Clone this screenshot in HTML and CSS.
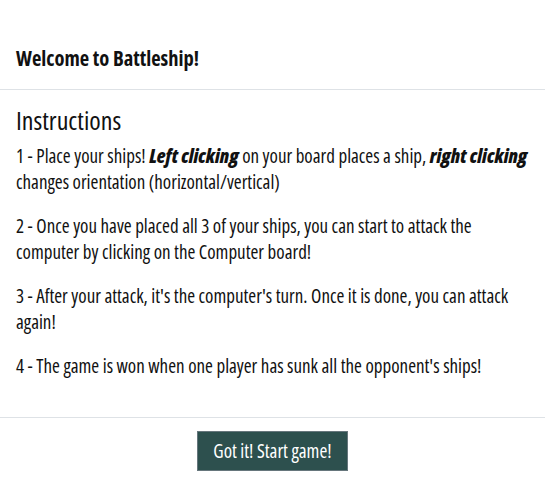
FILE: index.html
```html
<!DOCTYPE html>
<html lang="en">
<head>
<meta charset="utf-8">
<title>Battleship</title>
<link rel="stylesheet" href="styles.css">
</head>
<body>
<div class="modal">
  <div class="modal-header">
    <h5 class="modal-title">Welcome to Battleship!</h5>
  </div>
  <div class="modal-body">
    <h3 class="section-title">Instructions</h3>
    <p>1 - Place your ships! <b><i>Left clicking</i></b> on your board places a ship, <b><i>right clicking</i></b> changes orientation (horizontal/vertical)</p>
    <p>2 - Once you have placed all 3 of your ships, you can start to attack the computer by clicking on the Computer board!</p>
    <p>3 - After your attack, it's the computer's turn. Once it is done, you can attack again!</p>
    <p>4 - The game is won when one player has sunk all the opponent's ships!</p>
  </div>
  <div class="modal-footer">
    <button class="btn-start" type="button">Got it! Start game!</button>
  </div>
</div>
</body>
</html>
```
FILE: styles.css
```css
html, body {
  margin: 0;
  padding: 0;
  background: #fff;
}
body {
  font-family: "Open Sans", "Roboto Condensed", "Liberation Sans", sans-serif;
  font-stretch: 75%;
  font-weight: 500;
  color: #111;
}
.modal {
  padding-top: 28px;
}
.modal-header {
  padding: 16px;
  border-bottom: 1px solid #dee2e6;
}
.modal-title {
  margin: 0;
  font-size: 20.5px;
  line-height: 29px;
  font-weight: 700;
}
.modal-body {
  padding: 16px 16px 20px;
}
.section-title {
  margin: 0 0 8px;
  font-size: 26px;
  line-height: 29px;
  font-weight: 500;
}
.modal-body p {
  margin: 0 0 18px;
  font-size: 19px;
  line-height: 26px;
}
.modal-body b {
  font-weight: 800;
}
.modal-footer {
  border-top: 1px solid #dee2e6;
  padding: 13px 16px;
  display: flex;
  justify-content: center;
}
.btn-start {
  font-family: inherit;
  font-stretch: 75%;
  font-weight: 500;
  font-size: 19px;
  line-height: 24px;
  color: #fff;
  background: #2d504e;
  border: 1px solid #66767c;
  padding: 7px 15px;
  margin: 0;
  cursor: pointer;
}
```
